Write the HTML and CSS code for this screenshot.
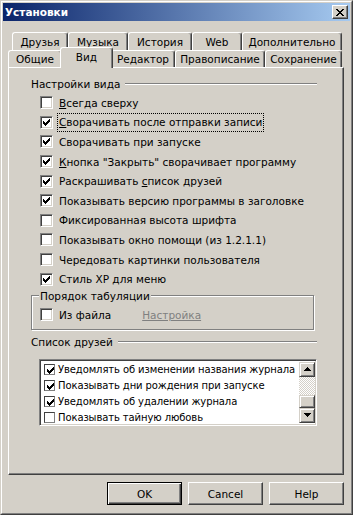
FILE: index.html
```html
<!DOCTYPE html>
<html>
<head>
    <meta charset="utf-8">
    <title>Установки</title>
    <link rel="stylesheet" href="styles.css">
</head>
<body>
    <div class="window">
        <div class="frame">
            <div class="titlebar">
                <span class="title">Установки</span>
                <span class="close">
                    <svg width="8" height="7" viewBox="0 0 8 7"><path d="M0 0h2v1H0z M6 0h2v1H6z M1 1h2v1H1z M5 1h2v1H5z M2 2h4v1H2z M3 3h2v1H3z M2 4h4v1H2z M1 5h2v1H1z M5 5h2v1H5z M0 6h2v1H0z M6 6h2v1H6z" fill="#000"/></svg>
                </span>
            </div>

            <div class="content">
                <div class="tab-row back">
                    <div class="tab tab-friends">Друзья</div>
                    <div class="tab tab-music">Музыка</div>
                    <div class="tab tab-history">История</div>
                    <div class="tab tab-web">Web</div>
                    <div class="tab tab-extra">Дополнительно</div>
                </div>
                <div class="tab-row front">
                    <div class="tab tab-common">Общие</div>
                    <div class="tab tab-view selected">Вид</div>
                    <div class="tab tab-editor">Редактор</div>
                    <div class="tab tab-spell">Правописание</div>
                    <div class="tab tab-save">Сохранение</div>
                </div>

                <div class="panel">
                    <div class="group-head">
                        <span>Настройки вида</span>
                        <div class="etched"></div>
                    </div>
                    <div class="options">
                        <div class="option"><span class="check"></span><span class="label"><u>В</u>сегда сверху</span></div>
                        <div class="option"><span class="check on"></span><span class="label focus"><u>С</u>ворачивать после отправки записи</span></div>
                        <div class="option"><span class="check on"></span><span class="label">Сворачивать при запуске</span></div>
                        <div class="option"><span class="check on"></span><span class="label"><u>К</u>нопка "Закрыть" сворачивает программу</span></div>
                        <div class="option"><span class="check on"></span><span class="label">Раскрашивать <u>с</u>писок друзей</span></div>
                        <div class="option"><span class="check on"></span><span class="label">Показывать версию программы в заголовке</span></div>
                        <div class="option"><span class="check"></span><span class="label">Фиксированная высота шрифта</span></div>
                        <div class="option"><span class="check"></span><span class="label">Показывать окно помощи (из 1.2.1.1)</span></div>
                        <div class="option"><span class="check"></span><span class="label">Чередовать картинки пользователя</span></div>
                        <div class="option"><span class="check on"></span><span class="label">Стиль XP для меню</span></div>
                    </div>

                    <fieldset class="groupbox">
                        <legend>Порядок табуляции</legend>
                        <div class="option">
                            <span class="check"></span><span class="label">Из файла</span>
                            <span class="link-disabled">Настройка</span>
                        </div>
                    </fieldset>

                    <div class="group-head friends-head">
                        <span>Список друзей</span>
                        <div class="etched"></div>
                    </div>

                    <div class="listbox">
                        <div class="list-items">
                            <div class="list-item"><span class="small-check on"></span>Уведомлять об изменении названия журнала</div>
                            <div class="list-item"><span class="small-check on"></span>Показывать дни рождения при запуске</div>
                            <div class="list-item"><span class="small-check on"></span>Уведомлять об удалении журнала</div>
                            <div class="list-item"><span class="small-check"></span>Показывать тайную любовь</div>
                        </div>
                        <div class="scrollbar">
                            <div class="sb-btn">
                                <svg width="7" height="4" viewBox="0 0 7 4"><path d="M3 0h1v1H3z M2 1h3v1H2z M1 2h5v1H1z M0 3h7v1H0z" fill="#000"/></svg>
                            </div>
                            <div class="sb-track"></div>
                            <div class="sb-thumb"></div>
                            <div class="sb-btn">
                                <svg width="7" height="4" viewBox="0 0 7 4"><path d="M0 0h7v1H0z M1 1h5v1H1z M2 2h3v1H2z M3 3h1v1H3z" fill="#000"/></svg>
                            </div>
                        </div>
                    </div>
                </div>

                <div class="buttons">
                    <button class="btn default">OK</button>
                    <button class="btn">Cancel</button>
                    <button class="btn">Help</button>
                </div>
            </div>
        </div>
    </div>
</body>
</html>
```

FILE: styles.css
```css
body {
    margin: 0;
    font-family: "DejaVu Sans", sans-serif;
    font-size: 10.5px;
    color: #000;
    background-color: #d4d0c8;
}
.window {
    width: 353px;
    height: 515px;
    box-sizing: border-box;
    border: 1px solid;
    border-color: #d4d0c8 #404040 #404040 #d4d0c8;
    background-color: #d4d0c8;
}
.frame {
    height: 100%;
    box-sizing: border-box;
    border: 1px solid;
    border-color: #fff #808080 #808080 #fff;
    padding: 1px;
    display: flex;
    flex-direction: column;
}
.titlebar {
    height: 18px;
    padding: 0 2px 0 2px;
    display: flex;
    align-items: center;
    justify-content: space-between;
    background: linear-gradient(to right, #0a246a, #a6caf0);
}
.title {
    color: #fff;
    font-weight: bold;
    font-size: 10.5px;
}
.close {
    width: 16px;
    height: 14px;
    box-sizing: border-box;
    border: 1px solid;
    border-color: #fff #404040 #404040 #fff;
    box-shadow: inset -1px -1px #808080;
    background-color: #d4d0c8;
    display: flex;
    align-items: center;
    justify-content: center;
}
.close svg, .sb-btn svg {
    display: block;
    shape-rendering: crispEdges;
}

.content {
    flex: 1;
    display: flex;
    flex-direction: column;
    padding: 11px 6px 0 5px;
}

/* tabs */
.tab-row {
    display: flex;
    height: 18px;
}
.tab-row.back {
    padding-left: 4px;
}
.tab-row.front {
    height: 17px;
    align-items: flex-end;
}
.tab {
    height: 18px;
    box-sizing: border-box;
    border: 1px solid;
    border-bottom: none;
    border-color: #fff #404040 #404040 #fff;
    border-radius: 3px 3px 0 0;
    box-shadow: inset -1px 0 #808080;
    background-color: #d4d0c8;
    display: flex;
    align-items: center;
    justify-content: center;
    white-space: nowrap;
}
.tab-row.front .tab {
    height: 17px;
}
.tab-row.front .tab.selected {
    height: 21px;
    margin: 0 -2px -1px -2px;
    position: relative;
    z-index: 1;
    padding-bottom: 2px;
}
.tab-friends { width: 56px; }
.tab-music { width: 60px; }
.tab-history { width: 64px; }
.tab-web { width: 50px; }
.tab-extra { width: 100px; }
.tab-common { width: 54px; }
.tab-view { width: 53px; }
.tab-editor { width: 64px; }
.tab-spell { width: 90px; }
.tab-save { width: 77px; }

/* panel */
.panel {
    height: 408px;
    box-sizing: border-box;
    border: 1px solid;
    border-color: #fff #404040 #404040 #fff;
    box-shadow: inset -1px -1px #808080;
    padding: 9px 26px 0 22px;
}
.group-head {
    display: flex;
    align-items: center;
    height: 14px;
}
.group-head span {
    margin-right: 5px;
}
.etched {
    flex: 1;
    border-top: 1px solid #808080;
    border-bottom: 1px solid #fff;
}
.options {
    margin-top: 2px;
    padding-left: 9px;
}
.option {
    height: 19.6px;
    display: flex;
    align-items: center;
}
.check {
    width: 13px;
    height: 13px;
    box-sizing: border-box;
    flex: none;
    border: 1px solid;
    border-color: #808080 #fff #fff #808080;
    box-shadow: inset 1px 1px #404040, inset -1px -1px #d4d0c8;
    background-color: #fff;
    margin-right: 5px;
}
.check.on, .small-check.on {
    background-image: url("data:image/svg+xml;utf8,<svg xmlns='http://www.w3.org/2000/svg' width='7' height='7' viewBox='0 0 7 7' shape-rendering='crispEdges'><path d='M0 2h1v3H0z M1 3h1v3H1z M2 4h1v3H2z M3 3h1v3H3z M4 2h1v3H4z M5 1h1v3H5z M6 0h1v3H6z' fill='black'/></svg>");
    background-repeat: no-repeat;
    background-position: 2px 2px;
}
.label {
    padding: 0 1px;
    white-space: nowrap;
}
.label.focus {
    border: 1px dotted #000;
    padding: 2px 1px 3px 1px;
    margin: -3px -1px -4px -1px;
}
.link-disabled {
    color: #808080;
    text-decoration: underline;
    margin-left: 30px;
}

.groupbox {
    margin: 1px 3px 0 0;
    padding: 4px 0 5px 8px;
    border: 1px solid #808080;
    box-shadow: inset 1px 1px #fff, 1px 1px #fff;
    min-width: 0;
}
.groupbox legend {
    padding: 0 1px;
    margin-left: -1px;
    background-color: #d4d0c8;
}
.groupbox .option {
    height: 18px;
}

.friends-head {
    margin-top: 5px;
}

/* list */
.listbox {
    margin: 10px 0 0 8px;
    height: 67px;
    box-sizing: border-box;
    border: 1px solid;
    border-color: #808080 #fff #fff #808080;
    box-shadow: inset 1px 1px #404040, inset -1px -1px #d4d0c8;
    padding: 2px 1px 2px 2px;
    background-color: #fff;
    display: flex;
}
.list-items {
    flex: 1;
    min-width: 0;
    overflow: hidden;
    font-size: 10px;
    letter-spacing: -0.1px;
}
.list-item {
    height: 15.75px;
    display: flex;
    align-items: center;
    white-space: nowrap;
}
.small-check {
    width: 11px;
    height: 11px;
    box-sizing: border-box;
    flex: none;
    border: 1px solid;
    border-color: #404040 #808080 #808080 #404040;
    background-color: #fff;
    background-position: 1px 1px;
    margin: 0 3px 0 2px;
}
.scrollbar {
    flex: none;
    width: 16px;
    display: flex;
    flex-direction: column;
}
.sb-btn, .sb-thumb {
    box-sizing: border-box;
    border: 1px solid;
    border-color: #d4d0c8 #404040 #404040 #d4d0c8;
    box-shadow: inset 1px 1px #fff, inset -1px -1px #808080;
    background-color: #d4d0c8;
}
.sb-btn {
    height: 15px;
    display: flex;
    align-items: center;
    justify-content: center;
}
.sb-track {
    flex: 1;
    background: repeating-conic-gradient(#fff 0 25%, #d4d0c8 0 50%) 0 0 / 2px 2px;
}
.sb-thumb {
    height: 13px;
}

/* buttons */
.buttons {
    display: flex;
    justify-content: flex-end;
    gap: 6px;
    margin-top: 7px;
}
.btn {
    width: 75px;
    height: 23px;
    box-sizing: border-box;
    padding: 0;
    font-family: "DejaVu Sans", sans-serif;
    font-size: 10.5px;
    color: #000;
    background-color: #d4d0c8;
    border: 1px solid;
    border-color: #fff #404040 #404040 #fff;
    box-shadow: inset -1px -1px #808080;
}
.btn.default {
    border-color: #000;
    box-shadow: inset 1px 1px #fff, inset -1px -1px #404040, inset -2px -2px #808080;
}
```
